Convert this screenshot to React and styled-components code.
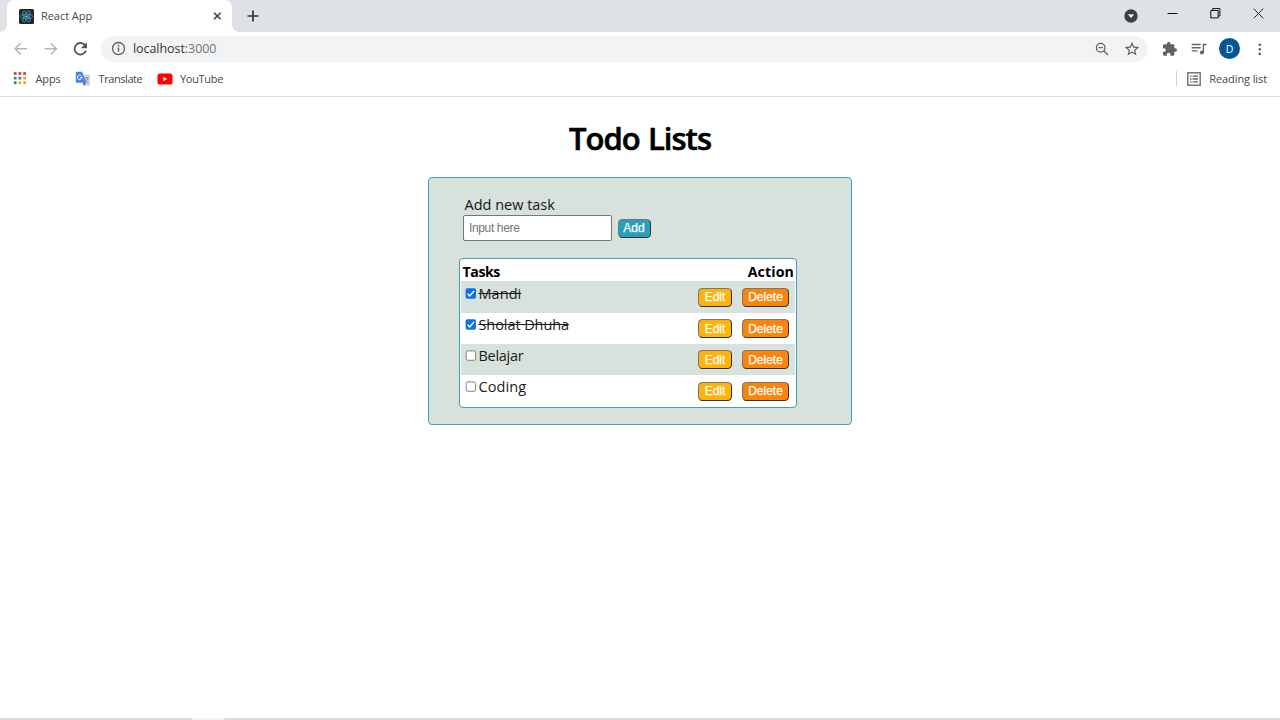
import React from 'react';
import styled, { createGlobalStyle } from 'styled-components';

const Global = createGlobalStyle`
  * { box-sizing: border-box; }
  body { margin: 0; background: #fff; font-family: "Open Sans", "Noto Sans", sans-serif; overflow: hidden; }
`;

const Window = styled.div`
  width: 1280px;
  height: 720px;
  display: flex;
  flex-direction: column;
  background: #fff;
`;

const TabStrip = styled.div`
  height: 32px;
  background: #dee1e6;
  display: flex;
  align-items: flex-start;
  padding-left: 7px;
`;

const Tab = styled.div`
  position: relative;
  width: 225px;
  height: 32px;
  background: #fff;
  border-radius: 7px 7px 0 0;
  display: flex;
  align-items: center;
  padding: 0 9px 0 12px;
  &::before, &::after {
    content: '';
    position: absolute;
    bottom: 0;
    width: 7px;
    height: 7px;
  }
  &::before { left: -7px; background: radial-gradient(circle at 0 0, transparent 6.5px, #fff 7px); }
  &::after { right: -7px; background: radial-gradient(circle at 100% 0, transparent 6.5px, #fff 7px); }
`;

const TabTitle = styled.span`
  margin-left: 7px;
  flex: 1;
  font-size: 11px;
  letter-spacing: -0.05px;
  line-height: 16px;
  color: #45484c;
`;

const Svg = styled.svg`
  display: block;
  flex: none;
  fill: none;
`;

const NewTab = styled.div`
  margin: 10px 0 0 15px;
`;

const WindowControls = styled.div`
  margin-left: auto;
  height: 32px;
  display: flex;
`;

const Control = styled.div`
  width: ${(p) => p.$w}px;
  padding-top: ${(p) => p.$top}px;
`;

const Toolbar = styled.div`
  height: 33px;
  display: flex;
  align-items: center;
  padding: 0 12px 0 13px;
`;

const NavIcons = styled.div`
  display: flex;
  gap: 15px;
  width: 88px;
`;

const AddressBar = styled.div`
  width: 1047px;
  height: 26px;
  border-radius: 13px;
  background: #f1f3f4;
  display: flex;
  align-items: center;
  padding: 0 8px 0 10px;
`;

const Url = styled.span`
  flex: 1;
  margin-left: 7px;
  font-size: 12.5px;
  line-height: 18px;
  letter-spacing: -0.06px;
  color: #303337;
  span { color: #6f7378; }
`;

const AddressIcons = styled.div`
  display: flex;
  gap: 14px;
`;

const ToolIcons = styled.div`
  margin-left: auto;
  display: flex;
  align-items: center;
  gap: 13px;
`;

const Avatar = styled.div`
  width: 21px;
  height: 21px;
  margin: 0 -1px;
  border-radius: 50%;
  background: #01579b;
  color: #fff;
  font-size: 10.5px;
  line-height: 22px;
  text-align: center;
`;

const Bookmarks = styled.div`
  height: 32px;
  border-bottom: 1px solid #dcdde0;
  display: flex;
  align-items: center;
  padding: 0 13px 4px 13px;
`;

const Bookmark = styled.div`
  display: flex;
  align-items: center;
  gap: ${(p) => p.$gap}px;
  width: ${(p) => p.$w};
  font-size: 11px;
  line-height: 16px;
  letter-spacing: ${(p) => p.$track || 0}px;
  white-space: nowrap;
  color: #45484c;
`;

const Reading = styled(Bookmark)`
  margin-left: auto;
  height: 15px;
  padding-left: 10px;
  border-left: 1px solid #cfd1d4;
`;

const Page = styled.main`
  flex: 1;
  display: flex;
  flex-direction: column;
  align-items: center;
`;

const Title = styled.h1`
  margin: 19px 0 17px;
  font-size: 31px;
  line-height: 44px;
  font-weight: 600;
  letter-spacing: -0.95px;
  word-spacing: 1px;
  color: #000;
  -webkit-text-stroke: 0.6px #000;
`;

const Panel = styled.section`
  width: 424px;
  height: 248px;
  border: 1px solid #3ea0b0;
  border-radius: 4px;
  background: #d8e1dc;
  padding: 16px 0 0 30px;
`;

const Form = styled.form`
  padding-left: 4px;
  height: 64px;
`;

const Label = styled.label`
  display: block;
  padding-left: 1.5px;
  height: 21px;
  font-size: 14.5px;
  line-height: 21px;
  color: #151515;
  letter-spacing: -0.01px;
`;

const Row = styled.div`
  display: flex;
  align-items: center;
  gap: 5.5px;
`;

const Input = styled.input`
  width: 149px;
  height: 26px;
  border: 1px solid #767676;
  border-radius: 2px;
  padding: 0 5px 1px;
  font: 12px "Liberation Sans", Arial, sans-serif;
  letter-spacing: -0.36px;
  background: #fff;
  &::placeholder { color: #757575; opacity: 1; }
`;

const Button = styled.button`
  width: ${(p) => p.$w}px;
  height: 19px;
  padding: ${(p) => (p.$low ? '1px 0 0' : '0 0 1px')};
  border: 1px solid;
  border-color: #767676 #333 #333 #767676;
  border-radius: 4.5px;
  background: ${(p) => p.$bg};
  color: #fff;
  font: 12px/15px "Liberation Sans", Arial, sans-serif;
  -webkit-text-stroke: 0.25px #fff;
`;

const List = styled.div`
  width: 338px;
  height: 150px;
  border: 1px solid #3ea0b0;
  border-radius: 4px;
  background: #fff;
  padding: 1px;
`;

const Header = styled.div`
  height: 21px;
  display: flex;
  justify-content: space-between;
  padding: 0 1px 0 1.5px;
  font-size: 14.2px;
  line-height: 23px;
  font-weight: 700;
  color: #000;
`;

const Heading = styled.span`
  letter-spacing: ${(p) => p.$track}px;
`;

const Task = styled.div`
  display: flow-root;
  height: ${(p) => p.$h}px;
  background: ${(p) => (p.$shaded ? '#d8e1dc' : '#fff')};
  padding: 0 6px 0 4px;
`;

const TaskContent = styled.div`
  display: flex;
  align-items: flex-start;
  margin-top: ${(p) => p.$top}px;
`;

const Box = styled.span`
  width: 11px;
  height: 11px;
  margin: 7px 2.5px 0 0;
`;

const Name = styled.span`
  flex: 1;
  font-size: 14.5px;
  line-height: 25px;
  letter-spacing: ${(p) => p.$track}px;
  color: #1b1b1b;
  text-decoration: ${(p) => (p.$done ? 'line-through' : 'none')};
`;

const Actions = styled.div`
  display: flex;
  gap: 10px;
  padding-top: ${(p) => p.$top}px;
`;

const BottomEdge = styled.div`
  height: 2px;
  background: linear-gradient(90deg, #dadada 192px, #f4f4f4 192px, #f4f4f4 222px, #dadada 226px);
`;

const ReactLogo = () => (
  <Svg width="15" height="15" viewBox="0 0 15 15">
    <rect width="15" height="15" rx="1.5" fill="#20262c" />
    <g stroke="#4fa9c0" strokeWidth=".75">
      <ellipse cx="7.5" cy="7.5" rx="6.2" ry="2.4" />
      <ellipse cx="7.5" cy="7.5" rx="6.2" ry="2.4" transform="rotate(60 7.5 7.5)" />
      <ellipse cx="7.5" cy="7.5" rx="6.2" ry="2.4" transform="rotate(120 7.5 7.5)" />
    </g>
    <circle cx="7.5" cy="7.5" r="1.2" fill="#61dafb" />
  </Svg>
);

const Arrow = ({ flip }) => (
  <Svg width="15" height="16" viewBox="0 0 15 16" stroke="#b4b7ba" strokeWidth="1.5">
    <path d={flip ? 'M1.5 7.8h12M7.8 2.2l5.6 5.6-5.6 5.6' : 'M14 7.8H2M7.7 2.2L2.1 7.8l5.6 5.6'} />
  </Svg>
);

const Reload = () => (
  <Svg width="16" height="16" viewBox="1 .7 24 24">
    <path fill="#515459" d="M19.2 5.2A10 10 0 1 0 21.8 15h-2.9A7.3 7.3 0 1 1 17.2 7.2L12.8 11.6H22V2.4z" />
  </Svg>
);

const dots = ['#d34336', '#d34336', '#d34336', '#35934e', '#3b78d8', '#f0a52a', '#35934e', '#f0a52a', '#f0a52a'];

const AppsIcon = () => (
  <Svg width="13" height="13" viewBox="0 0 13 13">
    {dots.map((c, i) => (
      <rect key={i} x={0.8 + (i % 3) * 4.7} y={0.1 + Math.floor(i / 3) * 4.6} width="2.8" height="2.8" fill={c} />
    ))}
  </Svg>
);

const TranslateIcon = () => (
  <Svg width="16" height="16" viewBox="0 0 16 16">
    <path d="M6 3.5h8.2q.8 0 .8.8v9.9q0 .8-.8.8H8.8z" fill="#d5d7da" />
    <path d="M8.8 7h5M11.3 5.8V7M12.8 7c-.4 2-1.8 3.6-3.2 4.4M9.8 8.2c.6 1.6 1.8 2.8 3.4 3.6" stroke="#74869e" strokeWidth=".9" />
    <path d="M1.8.8h5.4l3.8 11H1.8q-1 0-1-1v-9q0-1 1-1z" fill="#4b83e6" />
    <path d="M8 11.8h3L8.8 15z" fill="#3057a8" />
    <path d="M6.5 4.9A2.3 2.3 0 1 0 7 6.5H4.9" stroke="#fff" strokeWidth=".9" />
  </Svg>
);

const YouTubeIcon = () => (
  <Svg width="16" height="12" viewBox="0 0 16 12">
    <rect x=".5" y=".5" width="15" height="11" rx="2.6" fill="#f00" />
    <path d="M6.3 3.8v4.4L10.2 6z" fill="#fff" />
  </Svg>
);

const CheckBox = ({ checked }) => (
  <Box>
    <Svg width="12" height="11" viewBox="-.3 0 12 11">
      {checked ? (
        <>
          <rect x=".3" y=".3" width="10.4" height="10.4" rx="1.6" fill="#0b72ee" />
          <path d="M2.3 5.8l2.1 2.1 4.3-5" stroke="#fff" strokeWidth="1.5" />
        </>
      ) : (
        <rect x=".9" y=".9" width="9.4" height="9.4" rx="1.6" fill="#fff" stroke="#777" strokeWidth=".9" />
      )}
    </Svg>
  </Box>
);

const tasks = [
  { name: 'Mandi', done: true, h: 32, top: 0, track: 0.05 },
  { name: 'Sholat Dhuha', done: true, h: 31, top: -1, track: -0.08 },
  { name: 'Belajar', done: false, h: 31, top: -1, track: -0.3 },
  { name: 'Coding', done: false, h: 31, top: -1, track: 0.1 },
];

export default function App() {
  return (
    <Window>
      <Global />
      <TabStrip>
        <Tab>
          <ReactLogo />
          <TabTitle>React App</TabTitle>
          <Svg width="12" height="12" viewBox="0 0 12 12" stroke="#3c4043" strokeWidth="1.5">
            <path d="M3 2.7l6.6 6.6M9.6 2.7L3 9.3" />
          </Svg>
        </Tab>
        <NewTab>
          <Svg width="12" height="12" viewBox="0 0 12 12" stroke="#303438" strokeWidth="1.7">
            <path d="M6 .5v11M.5 6h11" />
          </Svg>
        </NewTab>
        <WindowControls>
          <Control $w={43} $top={9}>
            <Svg width="14" height="14" viewBox="0 0 14 14">
              <circle cx="7" cy="7" r="6.7" fill="#3c4043" />
              <path d="M3.8 5.3h6.4L7 9.3z" fill="#e8eaed" />
            </Svg>
          </Control>
          <Control $w={43} $top={8}>
            <Svg width="11" height="11" viewBox="0 0 11 11" stroke="#111"><path d="M.5 5.5h10" /></Svg>
          </Control>
          <Control $w={43} $top={8}>
            <Svg width="11" height="11" viewBox="0 0 11 11" stroke="#111">
              <path d="M.8 2.5h7.4v7.4H.8zM2.5 2.5V.6h7.4V8H8.2" />
            </Svg>
          </Control>
          <Control $w={27} $top={8}>
            <Svg width="11" height="11" viewBox="0 0 11 11" stroke="#222"><path d="M.7.7l9.6 9.6M10.3.7L.7 10.3" /></Svg>
          </Control>
        </WindowControls>
      </TabStrip>

      <Toolbar>
        <NavIcons>
          <Arrow />
          <Arrow flip />
          <Reload />
        </NavIcons>
        <AddressBar>
          <Svg width="15" height="15" viewBox="0 0 15 15">
            <circle cx="7.5" cy="7.5" r="6" stroke="#5f6368" strokeWidth="1.3" />
            <path d="M7.5 6.6v4.2M7.5 4v1.5" stroke="#5f6368" strokeWidth="1.5" />
          </Svg>
          <Url>localhost<span>:3000</span></Url>
          <AddressIcons>
            <Svg width="16" height="16" viewBox="0 0 16 16" stroke="#5f6368" strokeWidth="1.3">
              <circle cx="6.7" cy="6.7" r="4.3" />
              <path d="M4.6 6.7h4.2M9.8 9.8l4.2 4.2" />
            </Svg>
            <Svg width="16" height="16" viewBox="1 1 22 22">
              <path fill="#5f6368" d="M22 9.24l-7.19-.62L12 2 9.19 8.63 2 9.24l5.46 4.73L5.82 21 12 17.27 18.18 21l-1.63-7.03L22 9.24zM12 15.4l-3.76 2.27 1-4.28-3.32-2.88 4.38-.38L12 6.1l1.71 4.04 4.38.38-3.32 2.88 1 4.28L12 15.4z" />
            </Svg>
          </AddressIcons>
        </AddressBar>
        <ToolIcons>
          <Svg width="16" height="16" viewBox="-1 0 24 24">
            <path fill="#5f6368" d="M20.5 11H19V7c0-1.1-.9-2-2-2h-4V3.5C13 2.12 11.88 1 10.5 1S8 2.12 8 3.5V5H4c-1.1 0-1.99.9-1.99 2v3.8H3.5c1.49 0 2.7 1.21 2.7 2.7s-1.21 2.7-2.7 2.7H2V20c0 1.1.9 2 2 2h3.8v-1.5c0-1.49 1.21-2.7 2.7-2.7s2.7 1.21 2.7 2.7V22H17c1.1 0 2-.9 2-2v-4h1.5c1.38 0 2.5-1.12 2.5-2.5S21.88 11 20.5 11z" />
          </Svg>
          <Svg width="17" height="14" viewBox="-.7 0 17 14" stroke="#5f6368" strokeWidth="1.4">
            <path d="M1 2.5h9M1 5.7h9M1 8.9h5.8M12.7 10.5V2.5h3" />
            <circle cx="11.2" cy="10.5" r="2" fill="#5f6368" stroke="none" />
          </Svg>
          <Avatar>D</Avatar>
          <Svg width="16" height="16" viewBox="0 0 16 16">
            <g fill="#5f6368">
              <circle cx="7.8" cy="3.7" r="1.3" />
              <circle cx="7.8" cy="8.3" r="1.3" />
              <circle cx="7.8" cy="12.9" r="1.3" />
            </g>
          </Svg>
        </ToolIcons>
      </Toolbar>

      <Bookmarks>
        <Bookmark $gap={9.5} $w="62px" $track={-0.1}><AppsIcon />Apps</Bookmark>
        <Bookmark $gap={7.5} $w="82px" $track={-0.42}><TranslateIcon />Translate</Bookmark>
        <Bookmark $gap={7} $w="80px" $track={-0.3}><YouTubeIcon />YouTube</Bookmark>
        <Reading $gap={8} $w="auto" $track={-0.1}>
          <Svg width="14" height="14" viewBox="0 0 14 14" stroke="#5f6368" strokeWidth="1.3">
            <rect x=".8" y=".8" width="12.4" height="12.4" />
            <path d="M3 4.1h1.5M5.6 4.1H11M3 7h1.5M5.6 7H11M3 9.9h1.5M5.6 9.9H11" />
          </Svg>
          Reading list
        </Reading>
      </Bookmarks>

      <Page>
        <Title>Todo Lists</Title>
        <Panel>
          <Form onSubmit={(e) => e.preventDefault()}>
            <Label htmlFor="task">Add new task</Label>
            <Row>
              <Input id="task" placeholder="Input here" />
              <Button $w={33} $bg="#2a9fbc" $low>Add</Button>
            </Row>
          </Form>
          <List>
            <Header><Heading $track={-0.45}>Tasks</Heading><Heading $track={0.1}>Action</Heading></Header>
            {tasks.map((t, i) => (
              <Task key={t.name} $h={t.h} $shaded={i % 2 === 0}>
                <TaskContent $top={t.top}>
                  <CheckBox checked={t.done} />
                  <Name $done={t.done} $track={t.track}>{t.name}</Name>
                  <Actions $top={i === 3 ? 8 : 7}>
                    <Button $w={34} $bg="#ffb30a" $low={i === 1 || i === 2}>Edit</Button>
                    <Button $w={47} $bg="#fb8508" $low={i === 1 || i === 2}>Delete</Button>
                  </Actions>
                </TaskContent>
              </Task>
            ))}
          </List>
        </Panel>
      </Page>
      <BottomEdge />
    </Window>
  );
}
